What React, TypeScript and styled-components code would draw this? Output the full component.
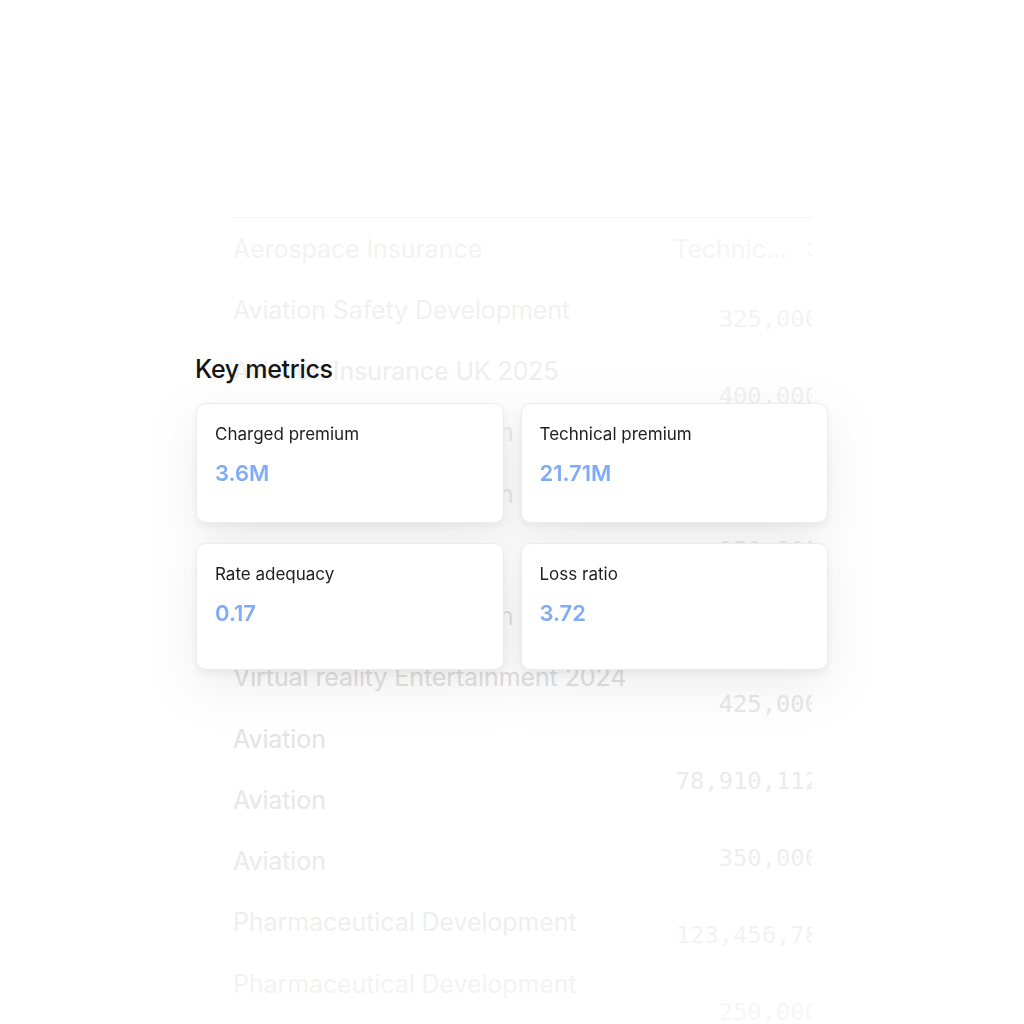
import React from 'react';
import styled, { createGlobalStyle } from 'styled-components';

type Metric = {
  label: string;
  value: string;
};

const names = [
  'Aerospace Insurance',
  'Aviation Safety Development',
  'Aviation Insurance UK 2025',
  'Cyber Security Platform',
  'Cyber Security Platform',
  'Marine Cargo',
  'Cyber Security Platform',
  'Virtual reality Entertainment 2024',
  'Aviation',
  'Aviation',
  'Aviation',
  'Pharmaceutical Development',
  'Pharmaceutical Development',
];

const values = [
  '325,000',
  '400,000',
  '275,000',
  '150,000',
  '600,000',
  '425,000',
  '78,910,112',
  '350,000',
  '123,456,78',
  '250,000',
];

const metrics: Metric[] = [
  { label: 'Charged premium', value: '3.6M' },
  { label: 'Technical premium', value: '21.71M' },
  { label: 'Rate adequacy', value: '0.17' },
  { label: 'Loss ratio', value: '3.72' },
];

export default function App() {
  return (
    <>
      <GlobalStyle />
      <Page>
        <Stage>
          <Table>
            <NameColumn>
              {names.map((n, i) => (
                <NameCell key={i}>{n}</NameCell>
              ))}
            </NameColumn>
            <ValueColumn>
              <HeaderCell>
                <span>Technic...</span>
                <SortIcon viewBox="0 0 12 20">
                  <path d="M2 7 L6 3 L10 7" />
                  <path d="M2 13 L6 17 L10 13" />
                </SortIcon>
              </HeaderCell>
              {values.map((v, i) => (
                <ValueCell key={i}>{v}</ValueCell>
              ))}
            </ValueColumn>
            <Fade />
          </Table>

          <Panel>
            <Title>Key metrics</Title>
            <Grid>
              {metrics.map((m, i) => (
                <Card key={m.label} $tall={i > 1}>
                  <Label>{m.label}</Label>
                  <Value>{m.value}</Value>
                </Card>
              ))}
            </Grid>
          </Panel>
        </Stage>
      </Page>
    </>
  );
}

const GlobalStyle = createGlobalStyle`
  html, body {
    margin: 0;
    padding: 0;
    background: #ffffff;
  }
  body {
    font-family: Inter, "Noto Sans", "Liberation Sans", sans-serif;
  }
`;

const Page = styled.div`
  width: 1024px;
  height: 1024px;
  overflow: hidden;
  background: #ffffff;
`;

const Stage = styled.div`
  position: relative;
  padding: 217px 0 0 233px;
`;

const Table = styled.div`
  position: relative;
  display: flex;
  width: 579px;
  border-top: 1px solid #f4f4f4;
  overflow: hidden;
`;

const NameColumn = styled.div`
  display: flex;
  flex-direction: column;
  flex: 1;
`;

const NameCell = styled.div`
  height: 61.25px;
  display: flex;
  align-items: center;
  font-size: 25px;
  letter-spacing: -0.1px;
  color: #e0e0e0;
  white-space: nowrap;
`;

const ValueColumn = styled.div`
  display: flex;
  flex-direction: column;
  align-items: flex-end;
  width: 146px;
  margin-right: -7px;
`;

const HeaderCell = styled.div`
  height: 62px;
  width: 100%;
  display: flex;
  align-items: center;
  gap: 18px;
  font-size: 25px;
  color: #e6e6e6;
  white-space: nowrap;
`;

const SortIcon = styled.svg`
  flex-shrink: 0;
  width: 12px;
  height: 20px;
  fill: none;
  stroke: #e2e2e2;
  stroke-width: 1.6;
`;

const ValueCell = styled.div`
  height: 77px;
  display: flex;
  align-items: center;
  font-family: "DejaVu Sans Mono", "Liberation Mono", monospace;
  font-size: 23.8px;
  color: #e6e6e6;
  white-space: nowrap;
`;

const Fade = styled.div`
  position: absolute;
  inset: 0;
  pointer-events: none;
  background: linear-gradient(
    to bottom,
    rgba(255, 255, 255, 0.65) 0%,
    rgba(255, 255, 255, 0.45) 20%,
    rgba(255, 255, 255, 0) 55%,
    rgba(255, 255, 255, 0.3) 75%,
    rgba(255, 255, 255, 0.75) 100%
  );
`;

const Panel = styled.div`
  position: absolute;
  left: 196px;
  top: 352px;
  width: 632px;
`;

const Title = styled.div`
  font-size: 25px;
  font-weight: 500;
  color: #161616;
  line-height: 34px;
  margin-left: -1px;
  margin-bottom: 17px;
  letter-spacing: -0.3px;
`;

const Grid = styled.div`
  display: grid;
  grid-template-columns: 1fr 1fr;
  column-gap: 17px;
  row-gap: 20px;
  filter: drop-shadow(0 16px 26px rgba(0, 0, 0, 0.07));
`;

const Card = styled.div<{ $tall?: boolean }>`
  display: flex;
  flex-direction: column;
  gap: 15px;
  height: ${(p) => (p.$tall ? '127px' : '120px')};
  box-sizing: border-box;
  padding: 20px 18px;
  background: #ffffff;
  border: 1px solid #ececec;
  border-radius: 10px;
  box-shadow: 0 4px 10px rgba(0, 0, 0, 0.06);
`;

const Label = styled.div`
  font-size: 17px;
  line-height: 21px;
  color: #1e1e1e;
`;

const Value = styled.div`
  font-size: 22px;
  line-height: 27px;
  font-weight: 600;
  color: #80abf7;
`;
